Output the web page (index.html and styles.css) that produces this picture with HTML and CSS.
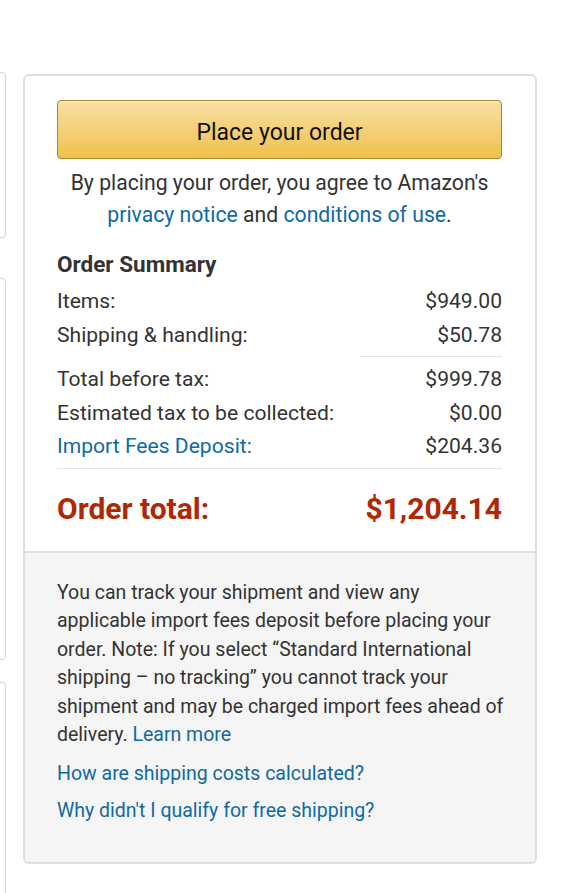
FILE: index.html
```html
<!DOCTYPE html>
<html lang="en">
<head>
<meta charset="utf-8">
<title>Place your order</title>
<link rel="stylesheet" href="styles.css">
</head>
<body>
<div class="page">
  <div class="side">
    <div class="side-box side-box--blue"></div>
    <div class="side-box side-box--mid"></div>
    <div class="side-box side-box--low"></div>
  </div>
  <div class="card">
    <div class="card-main">
      <button class="place-btn" type="button">Place your order</button>
      <p class="agree">By placing your order, you agree to Amazon's <a class="link" href="#">privacy notice</a> and <a class="link" href="#">conditions of use</a>.</p>
      <h2 class="summary-title">Order Summary</h2>
      <div class="row"><span>Items:</span><span>$949.00</span></div>
      <div class="row"><span>Shipping &amp; handling:</span><span>$50.78</span></div>
      <div class="divider divider--short"></div>
      <div class="row"><span>Total before tax:</span><span>$999.78</span></div>
      <div class="row"><span>Estimated tax to be collected:</span><span>$0.00</span></div>
      <div class="row"><a class="link" href="#">Import Fees Deposit:</a><span>$204.36</span></div>
      <div class="divider"></div>
      <div class="row total"><span>Order total:</span><span>$1,204.14</span></div>
    </div>
    <div class="card-foot">
      <p class="note">You can track your shipment and view any applicable import fees deposit before placing your order. Note: If you select “Standard International shipping – no tracking” you cannot track your shipment and may be charged import fees ahead of delivery. <a class="link" href="#">Learn more</a></p>
      <a class="link foot-link" href="#">How are shipping costs calculated?</a>
      <a class="link foot-link" href="#">Why didn't I qualify for free shipping?</a>
    </div>
  </div>
</div>
</body>
</html>
```
FILE: styles.css
```css
html, body {
  margin: 0;
  padding: 0;
  background: #fff;
}
body {
  font-family: Roboto, "Liberation Sans", Arial, sans-serif;
  color: #333;
  width: 566px;
  height: 893px;
  overflow: hidden;
}
.page {
  display: flex;
  align-items: flex-start;
}
.side {
  width: 6px;
  flex: none;
  display: flex;
  flex-direction: column;
  align-items: flex-end;
}
.side-box {
  width: 100px;
  border: 1.5px solid #d8d8d8;
  border-radius: 4px;
  box-sizing: border-box;
}
.side-box--blue {
  margin-top: 72px;
  height: 166px;
  border-color: #c3d8e6;
}
.side-box--mid {
  margin-top: 40px;
  height: 382px;
}
.side-box--low {
  margin-top: 22px;
  height: 211px;
  border-bottom: 0;
  border-radius: 4px 4px 0 0;
}
.card {
  margin-left: 17px;
  margin-top: 74px;
  width: 514px;
  box-sizing: border-box;
  border: 2px solid #dedede;
  border-radius: 6px;
  overflow: hidden;
}
.card-main {
  padding: 24px 33px 22px 32px;
  display: flex;
  flex-direction: column;
}
.place-btn {
  height: 59px;
  width: 100%;
  padding: 5px 0 0;
  border: 1px solid #a88734;
  border-radius: 4px;
  background: linear-gradient(to bottom, #f7dfa5, #f0c14b);
  box-shadow: inset 0 1px 0 rgba(255, 255, 255, 0.4);
  font-family: inherit;
  font-size: 23px;
  color: #111;
  cursor: pointer;
}
.agree {
  margin: 8px 0 0;
  font-size: 21.2px;
  line-height: 31.5px;
  text-align: center;
}
.link {
  color: #0f6aa3;
  text-decoration: none;
}
.summary-title {
  margin: 19px 0 5px;
  font-size: 22.5px;
  line-height: 30px;
  font-weight: 700;
  color: #333;
}
.row {
  display: flex;
  justify-content: space-between;
  font-size: 21.1px;
  line-height: 33.5px;
}
.divider {
  height: 1px;
  background: #e3e3e3;
  margin: 5px 0;
}
.divider--short {
  margin-left: auto;
  width: 142px;
}
.total {
  margin-top: 15.5px;
  font-size: 30px;
  line-height: 40px;
  font-weight: 700;
  color: #b12704;
}
.card-foot {
  background: #f5f5f5;
  border-top: 2px solid #e0e0e0;
  padding: 26px 31px 37px 32px;
  display: flex;
  flex-direction: column;
  align-items: flex-start;
}
.note {
  margin: 0;
  font-size: 19.5px;
  line-height: 28.4px;
}
.foot-link {
  font-size: 19.5px;
  line-height: 28px;
  margin-top: 11px;
}
.foot-link + .foot-link {
  margin-top: 9px;
}
```
